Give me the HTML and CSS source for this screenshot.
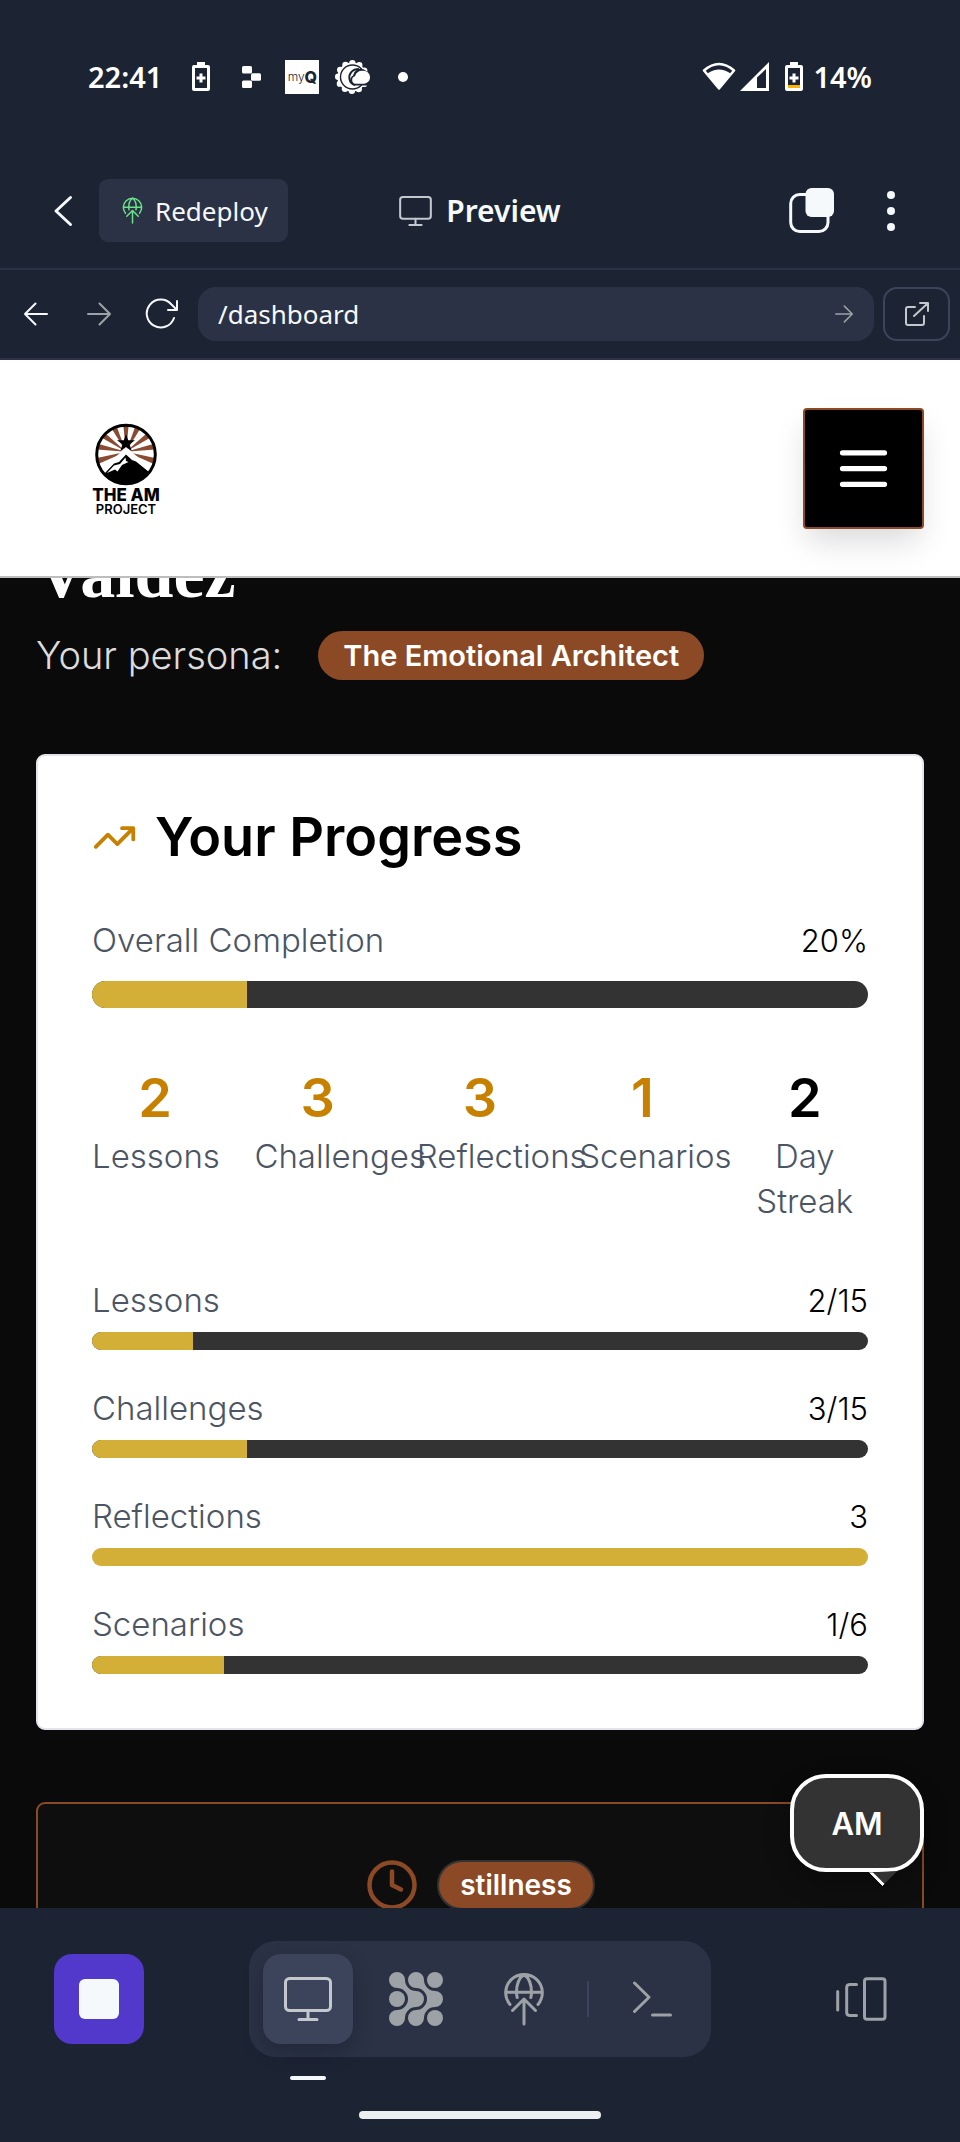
FILE: index.html
```html
<!DOCTYPE html>
<html lang="en">
<head>
<meta charset="utf-8">
<meta name="viewport" content="width=device-width, initial-scale=1">
<title>Preview</title>
<link rel="stylesheet" href="styles.css">
</head>
<body class="shell">
<svg width="0" height="0" class="defs" aria-hidden="true">
  <symbol id="globe" viewBox="0 0 54 54">
    <g fill="none" stroke="currentColor" stroke-width="3" stroke-linecap="round" stroke-linejoin="round">
      <path d="M13 32.5A18.3 18.3 0 1 1 41 32.5M9 20.3H45M27 2.500C22 6 19.500 13 19.500 20.300C19.500 22.500 19.800 24 20.200 25.500M27 2.500C32 6 34.500 13 34.500 20.300C34.500 22.500 34.200 24 33.800 25.500"/>
      <path d="M27 52V27M15.500 38.500L27 27L38.500 38.500"/>
    </g>
  </symbol>
  <symbol id="monitor" viewBox="0 0 48 44">
    <g fill="none" stroke="currentColor" stroke-width="3" stroke-linecap="round">
      <rect x="1.500" y="1.500" width="45" height="32" rx="4"/>
      <path d="M24 33.500V42M15 42.500H33"/>
    </g>
  </symbol>
  <symbol id="arrow" viewBox="0 0 24 24">
    <path d="M1 12H23M12.500 1.500L23 12L12.500 22.500" fill="none" stroke="currentColor" stroke-width="2" stroke-linecap="round" stroke-linejoin="round"/>
  </symbol>
  <symbol id="battery" viewBox="0 0 18 29">
    <path fill="currentColor" d="M5 0H13V3H16A2 2 0 0 1 18 5V27A2 2 0 0 1 16 29H2A2 2 0 0 1 0 27V5A2 2 0 0 1 2 3H5ZM3 6V26H15V6Z" fill-rule="evenodd"/>
    <path fill="currentColor" d="M7.500 11.500H10.500V14.500H13.500V17.500H10.500V20.500H7.500V17.500H4.500V14.500H7.500Z"/>
  </symbol>
</svg>

<div class="status">
  <div class="status-group status-left">
    <span class="clock">22:41</span>
    <svg class="battery-icon" width="18" height="29"><use href="#battery"/></svg>
    <svg class="blocks-icon" width="19" height="22" viewBox="0 0 19 22" fill="#fff"><rect width="10" height="7.500" rx="1.500"/><rect x="9" y="7.200" width="10" height="7.500" rx="1.500"/><rect y="14.500" width="10" height="7.500" rx="1.500"/></svg>
    <span class="myq"><span>my</span><b>Q</b></span>
    <svg width="35" height="34" viewBox="0 0 35 34">
      <circle cx="17" cy="17" r="14.500" fill="#fff"/>
      <circle cx="17" cy="17" r="13.800" fill="none" stroke="#fff" stroke-width="6.400" stroke-dasharray="0 7.226" stroke-linecap="round"/>
      <circle cx="17.500" cy="17" r="12" fill="none" stroke="#1c2333" stroke-width="1.400"/>
      <path d="M24 9C17 9 13.500 14 14.500 19C15 22 17 24 20 25" fill="none" stroke="#1c2333" stroke-width="2"/>
      <path d="M19 25.500A5.600 5.600 0 0 1 18 15.500A8 8 0 0 1 29 9.500L34 13V25.500Z" fill="#1c2333"/>
      <path d="M20.500 23.800A3.900 3.900 0 0 1 20 16.200A7 7 0 0 1 28 10.800A6.500 6.500 0 0 1 29 23.800Z" fill="#fff"/>
    </svg>
    <span class="more-dot"></span>
  </div>
  <div class="status-group status-right">
    <svg width="34" height="29" viewBox="0 0 34 29"><path d="M2 8.500Q17 -4.500 32 8.500L17 26.500Z" fill="none" stroke="#fff" stroke-width="2.500" stroke-linejoin="round"/><path d="M5.500 11.500Q17 3.500 28.500 11.500L17 26.500Z" fill="#fff"/></svg>
    <svg width="29" height="29" viewBox="0 0 29 29"><path fill="#fff" fill-rule="evenodd" d="M0 29L29 0V29ZM17 15.500V26H26V7Z"/></svg>
    <svg class="charge-icon" width="18" height="29" viewBox="0 0 18 29"><use href="#battery"/><rect x="3" y="23" width="12" height="3" fill="#fbb400"/></svg>
    <span>14%</span>
  </div>
</div>

<header class="toolbar">
  <div class="toolbar-left">
    <button class="plain back" aria-label="Back"><svg width="20" height="32" viewBox="0 0 20 32"><path d="M17.500 2.500L3 16L17.500 29.500" fill="none" stroke="#f5f9fc" stroke-width="3" stroke-linecap="round" stroke-linejoin="round"/></svg></button>
    <button class="redeploy"><svg width="27" height="27"><use href="#globe"/></svg><span>Redeploy</span></button>
  </div>
  <h1 class="toolbar-title"><svg width="33" height="30"><use href="#monitor"/></svg><span>Preview</span></h1>
  <div class="toolbar-right">
    <button class="plain" aria-label="Tabs"><svg width="45" height="45" viewBox="0 0 45 45"><rect x="1.700" y="6.500" width="37.300" height="37" rx="9" fill="none" stroke="#f5f9fc" stroke-width="3"/><rect x="16.500" width="28.500" height="29" rx="6" fill="#f5f9fc"/></svg></button>
    <button class="plain" aria-label="More"><svg width="10" height="40" viewBox="0 0 10 40" fill="#f5f9fc"><circle cx="5" cy="4" r="4"/><circle cx="5" cy="20" r="4"/><circle cx="5" cy="36" r="4"/></svg></button>
  </div>
</header>

<div class="address">
  <button class="plain nav-btn" aria-label="Go back"><svg class="flip" width="24" height="24"><use href="#arrow"/></svg></button>
  <button class="plain nav-btn dim" aria-label="Go forward"><svg width="24" height="24"><use href="#arrow"/></svg></button>
  <button class="plain nav-btn" aria-label="Reload"><svg width="34" height="32" viewBox="0 0 34 32"><path d="M29 20A14 14 0 1 1 26.500 6.500L32 12M32 3V12H23" fill="none" stroke="currentColor" stroke-width="2" stroke-linecap="round" stroke-linejoin="round"/></svg></button>
  <form class="url">
    <input class="url-input" type="text" value="/dashboard" aria-label="Page path">
    <button class="plain dim" type="button" aria-label="Go"><svg width="18" height="18"><use href="#arrow"/></svg></button>
  </form>
  <a class="open-tab" href="#" aria-label="Open in new tab"><svg width="24" height="24" viewBox="0 0 24 24"><path d="M10 5H3A2 2 0 0 0 1 7V21A2 2 0 0 0 3 23H17A2 2 0 0 0 19 21V14M9 14L22.500 1.500M15 1H23V9" fill="none" stroke="#c2c8cc" stroke-width="2" stroke-linecap="round" stroke-linejoin="round"/></svg></a>
</div>

<div class="site-bar">
  <svg class="logo" width="70" height="94" viewBox="0 0 70 94" role="img" aria-label="The AM Project">
    <defs><clipPath id="disc"><circle cx="35" cy="32.500" r="29"/></clipPath></defs>
    <circle cx="35" cy="32.500" r="29.500" fill="#fff"/>
    <g clip-path="url(#disc)">
      <g fill="#8a4b33">
        <path id="ray" d="M35 29.700L31.800 -2H38.200Z"/>
        <use href="#ray" transform="rotate(26 35 29.700)"/><use href="#ray" transform="rotate(-26 35 29.700)"/>
        <use href="#ray" transform="rotate(54 35 29.700)"/><use href="#ray" transform="rotate(-54 35 29.700)"/>
        <use href="#ray" transform="rotate(80 35 29.700)"/><use href="#ray" transform="rotate(-80 35 29.700)"/>
        <use href="#ray" transform="rotate(108 35 29.700)"/><use href="#ray" transform="rotate(-108 35 29.700)"/>
      </g>
      <path d="M35 25L61 47V64H9V50Z" fill="#fff"/>
      <path d="M35 32.500L41 38L45 39.500L58 50V64H8V52L14 51L23 41.500L28 40Z" fill="#000"/>
      <path d="M16 51L23 43.500L29 42L34.500 35.500L35 39L37.500 40L31 43L26.500 49.500L24 47.500Z" fill="#fff"/>
    </g>
    <circle cx="35" cy="32.500" r="29.300" fill="none" stroke="#000" stroke-width="3"/>
    <path d="M35 12L37.200 18.300H44L38.600 22.300L40.600 29L35 25L29.400 29L31.400 22.300L26 18.300H32.800Z" fill="#000"/>
    <text class="logo-name" x="35" y="79" text-anchor="middle">THE AM</text>
    <text class="logo-sub" x="35" y="92" text-anchor="middle">PROJECT</text>
  </svg>
  <button class="menu" aria-label="Menu"><svg width="63" height="63" viewBox="0 0 24 24" fill="none" stroke="#fff" stroke-width="2" stroke-linecap="round"><path d="M4 6H20M4 12H20M4 18H20"/></svg></button>
</div>

<main class="page">
  <h2 class="user">Valdez</h2>
  <div class="persona"><span class="persona-label">Your persona:</span><span class="pill">The Emotional Architect</span></div>

  <section class="card">
    <h3 class="card-title"><svg width="45" height="45" viewBox="0 0 24 24" fill="none" stroke="currentColor" stroke-width="2" stroke-linecap="round" stroke-linejoin="round"><path d="M22 7L13.500 15.500L8.500 10.500L2 17M16 7H22V13"/></svg><span>Your Progress</span></h3>

    <div class="meter meter-lg">
      <div class="meter-head"><span class="label">Overall Completion</span><span class="value">20%</span></div>
      <div class="track"><div class="fill" style="width:20%"></div></div>
    </div>

    <div class="stats">
      <div class="stat"><span class="num">2</span><span class="label">Lessons</span></div>
      <div class="stat"><span class="num">3</span><span class="label">Challenges</span></div>
      <div class="stat"><span class="num">3</span><span class="label">Reflections</span></div>
      <div class="stat"><span class="num">1</span><span class="label">Scenarios</span></div>
      <div class="stat"><span class="num num-dark">2</span><span class="label">Day Streak</span></div>
    </div>

    <div class="meters">
      <div class="meter">
        <div class="meter-head"><span class="label">Lessons</span><span class="value">2/15</span></div>
        <div class="track"><div class="fill" style="width:13%"></div></div>
      </div>
      <div class="meter">
        <div class="meter-head"><span class="label">Challenges</span><span class="value">3/15</span></div>
        <div class="track"><div class="fill" style="width:20%"></div></div>
      </div>
      <div class="meter">
        <div class="meter-head"><span class="label">Reflections</span><span class="value">3</span></div>
        <div class="track"><div class="fill" style="width:100%"></div></div>
      </div>
      <div class="meter">
        <div class="meter-head"><span class="label">Scenarios</span><span class="value">1/6</span></div>
        <div class="track"><div class="fill" style="width:17%"></div></div>
      </div>
    </div>
  </section>

  <section class="topic">
    <svg width="54" height="54" viewBox="0 0 24 24" fill="none" stroke="#8b4926" stroke-width="2" stroke-linecap="round" stroke-linejoin="round"><circle cx="12" cy="12" r="10"/><path d="M12 6V12L16 14"/></svg>
    <span class="pill pill-outlined">stillness</span>
  </section>

  <button class="chat">AM</button>
</main>

<footer class="dock">
  <div class="dock-row">
    <button class="stop" aria-label="Stop"><span class="stop-mark"></span></button>
    <nav class="tabs">
      <button class="tab tab-active" aria-label="Preview"><svg width="48" height="44"><use href="#monitor"/></svg></button>
      <button class="tab" aria-label="Agent"><svg width="54" height="54" viewBox="0 0 54 54" fill="currentColor">
        <circle cx="8" cy="27" r="8"/><circle cx="46" cy="8" r="8"/><circle cx="46" cy="46" r="8"/>
        <path id="chev" d="M16 8A8 8 0 1 0 8 16A11 11 0 0 1 19 27A11 11 0 0 1 8 38A8 8 0 1 0 16 46A11 11 0 0 1 27 35A8 8 0 0 0 27 19A11 11 0 0 1 16 8Z"/>
        <use href="#chev" x="19"/></svg></button>
      <button class="tab" aria-label="Deploy"><svg width="54" height="54"><use href="#globe"/></svg></button>
      <span class="rule"></span>
      <button class="tab" aria-label="Shell"><svg width="40" height="36" viewBox="0 0 40 36" fill="none" stroke="currentColor" stroke-width="3" stroke-linecap="round" stroke-linejoin="round"><path d="M2.500 2L17 16.200L2.500 30.500M20.500 34H38.500"/></svg></button>
    </nav>
    <button class="plain switch" aria-label="Switch pane"><svg width="51" height="44" viewBox="0 0 51 44" fill="none" stroke="#9da2a6" stroke-width="3" stroke-linecap="round" stroke-linejoin="round"><path d="M1.700 14.500V33M20.500 7.500H13.500A3 3 0 0 0 10.700 10.500V35.500A3 3 0 0 0 13.500 38.500H20.500"/><rect x="28.500" y="1.700" width="20.500" height="40.500" rx="2.500"/></svg></button>
  </div>
  <div class="home-bar"></div>
</footer>
</body>
</html>
```

FILE: styles.css
```css
* {
  box-sizing: border-box;
}

body, h1, h2, h3 {
  margin: 0;
}

svg {
  display: block;
  flex: none;
}

button {
  margin: 0;
  padding: 0;
  border: 0;
  font: inherit;
  color: inherit;
  cursor: pointer;
}

.defs {
  position: absolute;
}

.shell {
  display: flex;
  flex-direction: column;
  height: 100vh;
  background: #1c2333;
  color: #f5f9fc;
  font-family: "Noto Sans", sans-serif;
}

.plain {
  display: flex;
  align-items: center;
  justify-content: center;
  background: none;
}

.dim {
  color: #9da2a6;
}

/* Phone status bar */
.status {
  display: flex;
  flex: none;
  align-items: center;
  justify-content: space-between;
  height: 153px;
  padding: 0 88px;
  color: #fff;
  font-size: 29px;
  font-weight: 600;
  line-height: 40px;
}

.status-group {
  display: flex;
  align-items: center;
}

.status-left {
  gap: 16px;
}

.status-left .battery-icon {
  margin-left: 14px;
}

.status-left .blocks-icon {
  margin: 0 8px 0 16px;
}

.status-right {
  gap: 4px;
}

.charge-icon {
  margin: 0 6px 0 12px;
}

.myq {
  display: flex;
  align-items: center;
  justify-content: center;
  width: 34px;
  height: 34px;
  background: #fff;
  color: #1c2333;
  font: 300 12px/34px Inter, sans-serif;
}

.myq b {
  font-size: 16px;
  font-weight: 800;
}

.more-dot {
  width: 10px;
  height: 10px;
  margin-left: 12px;
  border-radius: 50%;
  background: #fff;
}

/* Workspace toolbar */
.toolbar {
  display: grid;
  flex: none;
  grid-template-columns: 1fr auto 1fr;
  align-items: center;
  height: 117px;
  padding: 0 64px 0 53px;
  border-bottom: 2px solid #2b3245;
}

.toolbar-left {
  display: flex;
  align-items: center;
  gap: 26px;
}

.redeploy {
  display: flex;
  align-items: center;
  gap: 9px;
  height: 63px;
  padding: 0 20px;
  border-radius: 9px;
  background: #2b3245;
  font-size: 26px;
}

.redeploy svg {
  color: #6ae288;
}

.toolbar-title {
  display: flex;
  align-items: center;
  gap: 14px;
  margin-left: 11px;
  font-size: 30px;
  font-weight: 600;
}

.toolbar-title svg,
.tab-active svg {
  color: #c2c8cc;
}

.toolbar-right {
  display: flex;
  align-items: center;
  justify-content: flex-end;
  gap: 52px;
}

/* Address row */
.address {
  display: flex;
  flex: none;
  align-items: center;
  height: 90px;
  padding: 0 10px 0 4px;
  border-bottom: 2px solid #2b3245;
}

.nav-btn {
  width: 63px;
  height: 54px;
}

.flip {
  transform: scaleX(-1);
}

.url {
  display: flex;
  flex: 1;
  align-items: center;
  height: 54px;
  margin: 0 9px 0 5px;
  padding: 0 21px 0 20px;
  border-radius: 18px;
  background: #2b3245;
}

.url-input {
  flex: 1;
  min-width: 0;
  padding: 0;
  border: 0;
  outline: 0;
  background: none;
  color: #f5f9fc;
  font: 400 26px/36px "Noto Sans", sans-serif;
}

.open-tab {
  display: flex;
  align-items: center;
  justify-content: center;
  width: 67px;
  height: 54px;
  border: 2px solid #3c445c;
  border-radius: 14px;
}

/* Previewed site */
.site-bar {
  display: flex;
  flex: none;
  align-items: center;
  justify-content: space-between;
  padding: 48px 36px 47px 91px;
  border-bottom: 2px solid #bdbdbd;
  background: #fff;
}

.logo-name {
  font: 800 17px Inter, sans-serif;
}

.logo-sub {
  font: 600 13px Inter, sans-serif;
}

.menu {
  display: flex;
  align-items: center;
  justify-content: center;
  width: 121px;
  height: 121px;
  border: 2px solid #8b4926;
  border-radius: 4px;
  background: #000;
  box-shadow: 0 16px 30px -4px rgba(0, 0, 0, 0.15);
}

.page {
  position: relative;
  flex: 1;
  min-height: 0;
  padding: 0 36px;
  overflow: hidden;
  background: #0a0a0a;
  font-family: Inter, sans-serif;
}

.user {
  margin-top: -40px;
  color: #fff;
  font: 700 70px/72px "Liberation Serif", serif;
}

.persona {
  display: flex;
  align-items: center;
  gap: 36px;
  margin: 21px 0 74px;
}

.persona-label {
  color: #dcdcdc;
  font-size: 38px;
  font-weight: 300;
  line-height: 49px;
}

.pill {
  padding: 0 25px;
  border-radius: 25px;
  background: #8b4926;
  color: #fff;
  font-size: 29px;
  font-weight: 600;
  line-height: 49px;
}

.pill-outlined {
  padding: 0 21px;
  border: 2px solid #333;
  font-size: 28px;
  line-height: 46px;
}

.card {
  display: flex;
  flex-direction: column;
  gap: 54px;
  padding: 54px;
  border: 2px solid #e4e4ec;
  border-radius: 9px;
  background: #fff;
  color: #000;
  font-size: 33px;
  font-weight: 300;
  line-height: 45px;
}

.card-title {
  display: flex;
  align-items: center;
  gap: 18px;
  font-size: 54px;
  font-weight: 600;
  line-height: 54px;
}

.card-title svg,
.num {
  color: #c78000;
}

.label {
  color: #4b5563;
}

.value {
  font-size: 31px;
}

.meter {
  display: flex;
  flex-direction: column;
  gap: 9px;
}

.meter-head {
  display: flex;
  justify-content: space-between;
}

.track {
  height: 18px;
  border-radius: 9px;
  overflow: hidden;
  background: #333;
}

.fill {
  height: 100%;
  background: #d3af37;
}

.meter-lg {
  gap: 18px;
}

.meter-lg .track {
  height: 27px;
  border-radius: 14px;
}

.stats {
  display: grid;
  grid-template-columns: repeat(5, minmax(0, 1fr));
  gap: 36px;
  text-align: center;
}

.stat {
  display: flex;
  flex-direction: column;
}

.num {
  font-size: 54px;
  font-weight: 600;
  line-height: 72px;
}

.num-dark {
  color: #000;
}

.meters {
  display: flex;
  flex-direction: column;
  gap: 36px;
}

.topic {
  display: flex;
  align-items: center;
  justify-content: center;
  gap: 18px;
  margin-top: 72px;
  padding: 54px;
  border: 2px solid #8b4926;
  border-radius: 9px;
  background: #0e0e0e;
}

/* Floats over the page, pinned to its lower right corner */
.chat {
  position: absolute;
  right: 36px;
  bottom: 36px;
  width: 134px;
  height: 98px;
  border: 4px solid #fff;
  border-radius: 36px;
  background: #333;
  color: #fff;
  font-size: 31px;
  font-weight: 600;
  box-shadow: 0 10px 24px rgba(0, 0, 0, 0.3);
}

.chat::after {
  content: "";
  position: absolute;
  right: 23px;
  bottom: -13px;
  width: 27px;
  height: 27px;
  border-bottom: 3px solid #fff;
  background: #333;
  transform: rotate(45deg);
  clip-path: polygon(100% 28%, 100% 100%, 28% 100%);
}

/* Bottom dock */
.dock {
  display: flex;
  flex: none;
  flex-direction: column;
  align-items: center;
  gap: 54px;
  padding: 33px 54px 23px;
}

.dock-row {
  display: flex;
  align-items: center;
  justify-content: space-between;
  width: 100%;
}

.stop {
  display: flex;
  align-items: center;
  justify-content: center;
  width: 90px;
  height: 90px;
  border-radius: 18px;
  background: #5239cc;
}

.stop-mark {
  width: 40px;
  height: 40px;
  border-radius: 6px;
  background: #f5f9fc;
}

.tabs {
  display: flex;
  align-items: center;
  gap: 18px;
  padding: 13px 14px;
  border-radius: 27px;
  background: #2b3245;
}

.tab {
  position: relative;
  display: flex;
  align-items: center;
  justify-content: center;
  width: 90px;
  height: 90px;
  border-radius: 18px;
  background: none;
  color: #9da2a6;
}

.tab-active {
  background: #3c445c;
  box-shadow: 0 8px 18px rgba(20, 24, 40, 0.35);
}

.tab-active::after {
  content: "";
  position: absolute;
  top: 122px;
  left: 27px;
  width: 36px;
  height: 4px;
  border-radius: 2px;
  background: #f5f9fc;
}

.rule {
  width: 2px;
  height: 36px;
  background: #3c445c;
}

.switch {
  width: 90px;
  height: 90px;
}

.home-bar {
  width: 242px;
  height: 8px;
  border-radius: 4px;
  background: #eceef0;
}
```
